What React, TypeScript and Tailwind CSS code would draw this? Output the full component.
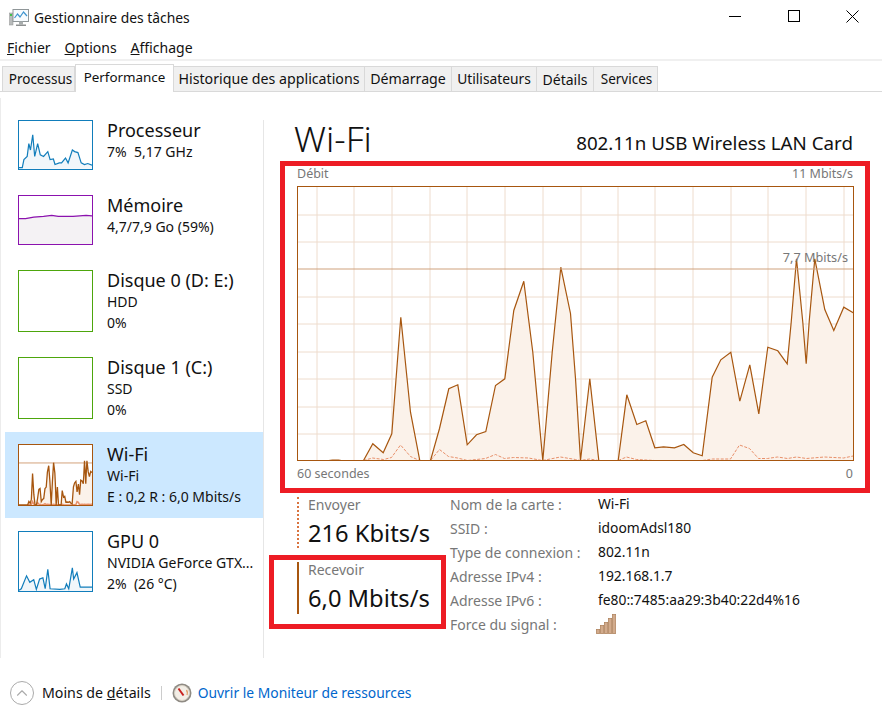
import { ChevronUp } from "lucide-react";

const FONT = "[font-family:'Noto_Sans',sans-serif]";

// courbe principale du graphique Wi-Fi (coordonnées écran)
const RX = "297,460 328,460 332,459.5 338,459.5 341,460 356,460 363,460 372.3,443.3 382.7,452.3 391.3,433.3 400.3,316.7 410,411.7 419.3,460 430,460 439,428 448.3,388.3 457.3,384.3 466.7,444.3 476,434.3 485.3,431 495,385 504.3,378.3 513.3,310 523.3,280.7 528,318 532.3,351.7 542.3,460 551.7,351.7 560.3,266.7 570,313 575,378 580,460 589.3,378.3 598.3,460 617.7,460 626.3,394.3 636.3,424 645.3,420.3 654.3,447.3 663,446.3 674,447.3 683.3,444 692.7,452.3 701.7,455.3 711.7,376.7 720.3,359.3 730.3,351.7 739.3,400.7 749.3,364.3 758.3,413.3 767.3,346.7 777.3,350.3 786.7,363.3 790.7,321.7 796,258.3 802.3,321.7 805.7,363.3 808.7,321 814.3,258.3 824.3,309 833.3,330 843.3,306.7 852.7,312.3";
const TX = "363,460 372,457.5 383,459 391,457 400,444.5 410,456 419,460 430,460 439,449 448,456 457,457.5 467,460 485,458 495,454 504,458 513,457 528,457.5 542,460 560,456.5 575,459 580,460 589,458.5 598,460 617.7,460 626,456.5 636,459 654,460 702,460 712,458.5 730,458.5 739,444.5 749,448 758,458 767,458 777,456.5 787,458 796,456.5 806,458 824,456.5 843,457.5 852.7,455.5";

const GRID_X = [316, 353, 391, 429, 466, 504, 542, 580, 617, 654, 692, 730, 767, 805, 843];
const GRID_Y = [214, 241, 296, 323, 351, 378, 406, 433];

const TABS = [
  { label: "Processus", w: "w-[73px] pl-[4px] text-[13.5px]" },
  { label: "Performance", w: "w-[99px] text-[13.4px]", active: true },
  { label: "Historique des applications", w: "w-[191px] text-[14.2px]" },
  { label: "Démarrage", w: "w-[87px] text-[14.2px]" },
  { label: "Utilisateurs", w: "w-[85px] text-[13.8px]" },
  { label: "Détails", w: "w-[57px] text-[14px]" },
  { label: "Services", w: "w-[64px] pl-[2px] text-[13.5px]" },
];

const DETAILS = [
  ["Nom de la carte :", "Wi-Fi"],
  ["SSID :", "idoomAdsl180"],
  ["Type de connexion :", "802.11n"],
  ["Adresse IPv4 :", "192.168.1.7"],
  ["Adresse IPv6 :", "fe80::7485:aa29:3b40:22d4%16"],
  ["Force du signal :", ""],
];

function WifiLines({ thick }: { thick?: boolean }) {
  return (
    <>
      <polygon points={`297,460 ${RX} 852.7,460`} fill="#fbf2ea" stroke="none" />
      <polyline points={TX} fill="none" stroke="#e8906a" strokeWidth={thick ? 1.5 : 1} strokeDasharray={thick ? undefined : "3 1.5"} vectorEffect="non-scaling-stroke" />
      <polyline points={RX} fill="none" stroke="#a7560f" strokeWidth={thick ? 1.3 : 1.2} vectorEffect="non-scaling-stroke" />
    </>
  );
}

function Thumb({ color, h, children, view }: { color: string; h: string; children?: React.ReactNode; view?: string }) {
  return (
    <div className={`w-[75px] ${h} shrink-0 border bg-white`} style={{ borderColor: color }}>
      {children && (
        <svg className="block w-full h-full" viewBox={view} preserveAspectRatio="none">
          {children}
        </svg>
      )}
    </div>
  );
}

function Area({ pts, base, stroke, fill }: { pts: string; base: string; stroke: string; fill: string }) {
  return (
    <>
      <polygon points={`${base} ${pts}`} fill={fill} />
      <polyline points={pts} fill="none" stroke={stroke} strokeWidth={1.2} vectorEffect="non-scaling-stroke" />
    </>
  );
}

function SideItem({ thumb, title, lines, selected }: { thumb: React.ReactNode; title: string; lines: string[]; selected?: boolean }) {
  return (
    <div className={`flex items-start ml-[4px] mb-px pl-[13px] py-[12px] ${selected ? "bg-[#cce8ff]" : ""}`}>
      {thumb}
      <div className="ml-[14px] -mt-[1px] -mb-[4px] whitespace-pre text-[#111]">
        <div className="text-[18px] leading-[23px]">{title}</div>
        {lines.map((l) => (
          <div key={l} className="text-[14px] leading-[20.5px]">{l}</div>
        ))}
      </div>
    </div>
  );
}

function AppIcon() {
  return (
    <svg width="20" height="18" viewBox="0 0 20 18">
      <rect x="0.5" y="4" width="3.5" height="12" fill="#b9bcbc" stroke="#8d9090" strokeWidth="0.5" />
      <rect x="1" y="5" width="2" height="2" fill="#3fc04a" />
      <rect x="4" y="0.5" width="15.5" height="12" fill="#f7fbfe" stroke="#8f9698" />
      <polyline points="5.5,9 8.5,5 11,8 14.5,3 18,7" fill="none" stroke="#3f95cf" strokeWidth="1.2" />
      <rect x="10" y="12.5" width="4" height="3" fill="#a8adad" />
      <rect x="7" y="15.5" width="10" height="1.5" fill="#8d9090" />
    </svg>
  );
}

function MonitorIcon() {
  return (
    <svg width="20" height="20" viewBox="0 0 20 20">
      <circle cx="10" cy="10" r="9.5" fill="#8f8b84" />
      <circle cx="10" cy="10" r="7.5" fill="#f3eee6" stroke="#d8d2c6" />
      <path d="M14.5 7 A5.5 5.5 0 0 1 15 12" fill="none" stroke="#e2a06a" strokeWidth="1.4" />
      <line x1="6.5" y1="5.5" x2="11.5" y2="12.5" stroke="#c8221f" strokeWidth="2" />
    </svg>
  );
}

function SignalIcon() {
  return (
    <svg width="20" height="20" viewBox="0 0 20 20">
      {[
        [0, 15],
        [4, 11],
        [8, 8],
        [12, 4],
        [16, 0],
      ].map(([x, y]) => (
        <rect key={x} x={x + 0.5} y={y + 0.5} width="3.2" height={19 - y} fill="#d2ab8c" stroke="#b0845f" strokeWidth="0.8" />
      ))}
    </svg>
  );
}

export default function App() {
  return (
    <div className={`w-[882px] h-[723px] bg-white flex flex-col overflow-hidden text-[#111] ${FONT}`}>
      {/* barre de titre */}
      <div className="h-[36px] flex items-center shrink-0">
        <div className="ml-[9px] mr-[5px] flex"><AppIcon /></div>
        <span className="text-[13.85px]">Gestionnaire des tâches</span>
        <div className="ml-auto flex items-center -mt-[4px]">
          <div className="w-[59px] flex justify-center"><div className="w-[12px] h-px bg-black" /></div>
          <div className="w-[59px] flex justify-center"><div className="w-[12px] h-[12px] border border-black" /></div>
          <div className="w-[59px] flex justify-center">
            <svg width="13" height="13" viewBox="0 0 13 13"><path d="M0.5 0.5 L12.5 12.5 M12.5 0.5 L0.5 12.5" stroke="#000" fill="none" /></svg>
          </div>
        </div>
      </div>

      {/* menu */}
      <div className="h-[25px] shrink-0 flex items-center pl-[7px] pb-[1px] gap-[14px] text-[14px] border-b-2 border-[#f0f0f0]">
        <span><u>F</u>ichier</span>
        <span><u>O</u>ptions</span>
        <span><u>A</u>ffichage</span>
      </div>

      {/* onglets */}
      <div className="h-[31px] shrink-0 flex items-end pl-[2px] border-b border-[#d9d9d9]">
        {TABS.map((t) =>
          t.active ? (
            <div key={t.label} className={`${t.w} h-[28px] -mb-px pb-[2px] bg-white border border-b-0 border-[#d9d9d9] flex items-center justify-center`}>
              {t.label}
            </div>
          ) : (
            <div key={t.label} className={`${t.w} h-[25px] bg-[#f0f0f0] border-r border-t border-[#d9d9d9] first:border-l flex items-center justify-center`}>
              {t.label}
            </div>
          )
        )}
      </div>

      <div className="flex flex-1 min-h-0">
        <div className="w-px h-[560px] mt-[6px] bg-[#ececec] shrink-0" />

        {/* colonne de gauche */}
        <div className="w-[262px] shrink-0 pt-[16px]">
          <SideItem
            title="Processeur"
            lines={["7%  5,17 GHz"]}
            thumb={
              <Thumb color="#117dbb" h="h-[50px]" view="55 360 223 149">
                <Area base="278,508 55,508" fill="#f1f6fa" stroke="#117dbb" pts="55,505 65,505 70,480 80,470 85,430 90,450 97,403 103,470 112,430 120,465 130,470 143,455 150,480 160,478 165,495 178,490 185,490 197,475 205,490 218,450 225,455 235,458 245,490 255,495 265,492 278,497" />
              </Thumb>
            }
          />
          <SideItem
            title="Mémoire"
            lines={["4,7/7,9 Go (59%)"]}
            thumb={
              <Thumb color="#8b12ae" h="h-[50px]" view="55 45 223 148">
                <Area base="278,193 55,193" fill="#f4f2f4" stroke="#8b12ae" pts="55,115 75,115 100,110 130,108 155,105 175,108 220,108 260,105 278,106" />
              </Thumb>
            }
          />
          <SideItem title="Disque 0 (D: E:)" lines={["HDD", "0%"]} thumb={<Thumb color="#4da60c" h="h-[62px]" />} />
          <SideItem title="Disque 1 (C:)" lines={["SSD", "0%"]} thumb={<Thumb color="#4da60c" h="h-[62px]" />} />
          <SideItem
            selected
            title="Wi-Fi"
            lines={["Wi-Fi", "E : 0,2 R : 6,0 Mbits/s"]}
            thumb={
              <Thumb color="#a7560f" h="h-[62px]" view="297 186 556 274">
                <line x1="297" x2="853" y1="268" y2="268" stroke="#d4a27c" strokeWidth="1" vectorEffect="non-scaling-stroke" />
                <WifiLines thick />
              </Thumb>
            }
          />
          <SideItem
            title="GPU 0"
            lines={["NVIDIA GeForce GTX...", "2%  (26 °C)"]}
            thumb={
              <Thumb color="#117dbb" h="h-[61px]" view="55 334 223 183">
                <Area base="278,517 55,517" fill="#f1f6fa" stroke="#117dbb" pts="55,515 62,510 78,470 88,490 100,482 108,512 118,480 128,476 135,510 143,450 150,510 180,512 195,510 200,495 207,510 218,445 222,480 232,460 242,505 278,505" />
              </Thumb>
            }
          />
        </div>

        <div className="w-px h-[538px] mt-[28px] bg-[#e6e6e6] shrink-0" />

        {/* panneau de droite */}
        <div className="flex-1 min-w-0 pt-[23px]">
          <div className="flex items-end ml-[30px] mr-[29px] h-[46px]">
            <span className="text-[35.5px] leading-[46px] font-light">Wi-Fi</span>
            <span className="ml-auto text-[18.75px] leading-[26px] mb-[5px]">802.11n USB Wireless LAN Card</span>
          </div>

          {/* cadre rouge du graphique */}
          <div className="ml-[16px] w-[590px] h-[332px] border-[5px] border-[#ed1c24] pt-[1px] px-[12px]">
            <div className="flex justify-between text-[12.5px] leading-[14px] text-[#777] mb-[5px] h-[14px]">
              <span>Débit</span>
              <span>11 Mbits/s</span>
            </div>
            <div className="relative w-[557px] h-[275px]">
              <svg className="block w-full h-full" viewBox="296.5 185.5 557 275">
                {GRID_X.map((x) => (
                  <line key={x} x1={x + 0.5} x2={x + 0.5} y1="186" y2="460" stroke="#eedccd" />
                ))}
                {GRID_Y.map((y) => (
                  <line key={y} x1="297" x2="853" y1={y + 0.5} y2={y + 0.5} stroke="#eedccd" />
                ))}
                <WifiLines />
                <line x1="297" x2="853" y1="268.5" y2="268.5" stroke="#cfa17d" />
                <rect x="297" y="186" width="556" height="274" fill="none" stroke="#a7560f" />
              </svg>
              <span className="absolute right-[6px] top-[64px] text-[12.7px] leading-[14px] text-[#777]">7,7 Mbits/s</span>
            </div>
            <div className="flex justify-between text-[12.5px] leading-[14px] text-[#777] mt-[6px]">
              <span>60 secondes</span>
              <span>0</span>
            </div>
          </div>

          <div className="flex ml-[5px] mt-[2px]">
            {/* débits */}
            <div className="w-[177px] shrink-0">
              <div className="h-[60px] relative pl-[39px] whitespace-nowrap">
                <div className="absolute left-[28px] top-[2px] h-[51px] border-l-2 border-dotted border-[#d9743f]" />
                <div className="text-[14px] leading-[20px] text-[#777]">Envoyer</div>
                <div className="text-[23.7px] leading-[34px] mt-[1px]">216 Kbits/s</div>
              </div>
              <div className="h-[74px] border-[5px] border-[#ed1c24] relative pl-[34px] whitespace-nowrap">
                <div className="absolute left-[23px] top-[2px] h-[52px] w-[2px] bg-[#a7560f]" />
                <div className="text-[14px] leading-[20px] text-[#777]">Recevoir</div>
                <div className="text-[23.7px] leading-[34px] mt-[1px]">6,0 Mbits/s</div>
              </div>
            </div>

            {/* propriétés */}
            <div className="ml-[4px] -mt-[3px] grid grid-cols-[148px_auto] auto-rows-[24px] text-[14px] items-center whitespace-nowrap">
              {DETAILS.map(([k, v]) => (
                <div key={k} className="contents">
                  <span className="text-[#777]">{k}</span>
                  {v ? <span className="text-[13.85px]">{v}</span> : <span className="-ml-[2px] flex"><SignalIcon /></span>}
                </div>
              ))}
            </div>
          </div>
        </div>
      </div>

      {/* pied */}
      <div className="h-[64px] shrink-0 flex items-center pl-[10px] pt-[4px] text-[14.2px]">
        <div className="w-[24px] h-[24px] rounded-full border border-[#ababab] flex items-center justify-center text-[#ababab]">
          <ChevronUp size={18} strokeWidth={1.5} />
        </div>
        <span className="ml-[8px]">Moins de <u>d</u>étails</span>
        <div className="ml-[10px] mr-[10px] w-px h-[14px] bg-[#ccc]" />
        <MonitorIcon />
        <span className="ml-[6px] text-[13.85px] text-[#0066cc]">Ouvrir le Moniteur de ressources</span>
      </div>
    </div>
  );
}
